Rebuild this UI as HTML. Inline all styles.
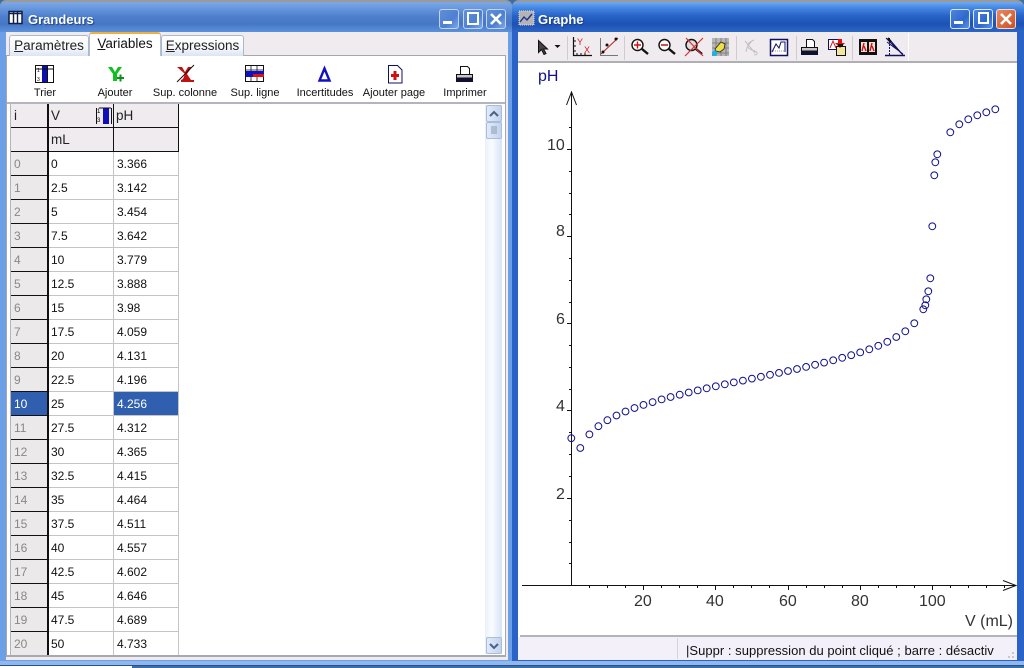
<!DOCTYPE html>
<html><head><meta charset="utf-8"><title>Grandeurs - Graphe</title>
<style>
*{box-sizing:border-box}
html,body{margin:0;padding:0;width:1024px;height:668px;overflow:hidden;background:#3b6ea5}
body{position:relative;font-family:"Liberation Sans",sans-serif;color:#111}
div{position:absolute}
.strip{left:0;top:660px;width:1024px;height:8px;background:linear-gradient(#2f62b8 0,#2f62b8 1px,#8fb8ee 1px,#8fb8ee 5px,#2a4f8a 5px,#2a4f8a 6px,#3b6ea5 6px)}
.strip2{left:0;top:666px;width:132px;height:2px;background:#fff}
.frameL{left:0;top:0;width:512px;height:661px;background:#6d9fe6;border-radius:6px 6px 0 0}
.frameR{left:512px;top:0;width:512px;height:661px;background:#2a63c8;border-radius:6px 6px 0 0}
.titleL{left:0;top:0;width:512px;height:32px;border-top:2px solid #9a9a9a;border-radius:7px 7px 0 0;background:linear-gradient(#7fa8e2 0,#6b9be0 5px,#4f80cc 14px,#4677c6 22px,#5c92dc 30px)}
.titleR{left:512px;top:0;width:512px;height:32px;border-top:2px solid #9a9a9a;border-radius:7px 7px 0 0;background:linear-gradient(#6cabf2 0,#4a8be6 5px,#2763c6 14px,#1c52b4 22px,#2d66c6 30px)}
.tt{top:12px;font-weight:bold;font-size:13px;color:#fff;line-height:16px;text-shadow:1px 1px 1px #1c3f80}
.b{top:9px;width:20px;height:20px;border-radius:3px;border:1px solid #c3d4f0;background:linear-gradient(135deg,#5f8fd8,#4e80d2 60%,#7ea6e6)}
.r2{background:linear-gradient(135deg,#4b85e0,#2f68cc 60%,#5c92e6);border-color:#dfe8f8}
.cl{background:linear-gradient(135deg,#e88a62,#d8683c 60%,#c85028);border-color:#f2dcd0}
.bodyL{left:6px;top:32px;width:502px;height:628px;background:#efebef}
.panel{left:6px;top:55px;width:500px;height:602px;background:#fff;border:1px solid #a6a6ae;border-bottom:2px solid #a8a8b0}
.tab{top:35px;height:21px;border:1px solid #a8b8d0;border-bottom:none;border-radius:3px 3px 0 0;background:linear-gradient(#fff,#f6f7fa 60%,#dbe4f2);font-size:13.5px;line-height:20px;text-align:center;color:#222}
.tabA{top:32px;height:24px;background:#fff;border:1px solid #b8c0d0;border-top:2px solid #f0b040;border-bottom:none;border-radius:3px 3px 0 0;font-size:13.5px;line-height:20px;text-align:center;color:#111;z-index:2}
u{text-decoration:underline}
.lab{top:86px;height:14px;font-size:11px;line-height:14px;text-align:center;width:90px;color:#111}
.sep{left:7px;top:102px;width:498px;height:2px;background:#b4b4ba}
.grid{left:10px;top:104px;width:493px;height:551px;overflow:hidden;border-left:1px solid #b4b4ba}
.grid div{height:24px;font-size:12px;line-height:24px;padding-left:2px;white-space:nowrap}
.grid .h{background:#efebef;border-right:1px solid #111;border-bottom:1px solid #111;color:#222;font-size:13.5px}
.i{left:0;width:38px;background:#ece9ea;color:#888;border-right:2px solid #111;border-bottom:1px solid #111;padding-left:3px!important}
.v{left:38px;width:65px;border-right:1px solid #c4c4c4;border-bottom:1px solid #c4c4c4;background:#fff}
.p{left:103px;width:65px;border-right:1px solid #c4c4c4;border-bottom:1px solid #c4c4c4;background:#fff;padding-left:3px!important}
.sel{background:#2f5fae!important;color:#fff!important}
.track{left:485px;top:105px;width:17px;height:549px;background:linear-gradient(90deg,#eaf0fb,#fafcff 40%,#d6e3f7)}
.sb{left:486px;width:16px;border:1px solid #a8bcdc;border-radius:2px;background:linear-gradient(90deg,#e2ebf8,#c3d3ee)}
.bodyR{left:518px;top:32px;width:499px;height:628px;background:#fff}
.tb{left:518px;top:32px;width:499px;height:31px;background:#efebef;border-bottom:2px solid #aeaeb4}
.stL{left:520px;top:635px;width:497px;height:2px;background:#b4b4b4}
.st{left:518px;top:637px;width:499px;height:23px;background:#f3f0fa}
.stt{left:686px;top:643px;font-size:13px;line-height:15px;white-space:nowrap;color:#111;letter-spacing:.03px}
svg{position:absolute;left:0;top:0;z-index:5}
</style></head><body>
<div class="strip"></div><div class="strip2"></div>
<div class="frameL"></div><div class="frameR"></div>
<div class="titleL"></div><div class="titleR"></div>
<div class="tt" style="left:28px">Grandeurs</div>
<div class="tt" style="left:538px">Graphe</div>
<div class="b" style="left:439px"></div><div class="b" style="left:463px"></div><div class="b" style="left:486px"></div>
<div class="b r2" style="left:950px"></div><div class="b r2" style="left:973px"></div><div class="b cl" style="left:996px"></div>

<div class="bodyL"></div>
<div class="panel"></div>
<div class="tab" style="left:9px;width:80px"><u>P</u>aramètres</div>
<div class="tabA" style="left:89px;width:72px"><u>V</u>ariables</div>
<div class="tab" style="left:161px;width:83px"><u>E</u>xpressions</div>
<div class="lab" style="left:0">Trier</div>
<div class="lab" style="left:70px">Ajouter</div>
<div class="lab" style="left:140px">Sup. colonne</div>
<div class="lab" style="left:210px">Sup. ligne</div>
<div class="lab" style="left:280px">Incertitudes</div>
<div class="lab" style="left:349px">Ajouter page</div>
<div class="lab" style="left:420px">Imprimer</div>
<div class="sep"></div>

<div class="grid">
<div class="h" style="left:0;top:0;width:38px;border-right-width:2px;padding-left:3px">i</div><div class="h" style="left:38px;top:0;width:65px">V</div><div class="h" style="left:103px;top:0;width:65px">pH</div>
<div class="h" style="left:0;top:24px;width:38px;border-right-width:2px"></div><div class="h" style="left:38px;top:24px;width:65px">mL</div><div class="h" style="left:103px;top:24px;width:65px"></div>
<div class="i" style="top:48px">0</div><div class="v" style="top:48px">0</div><div class="p" style="top:48px">3.366</div>
<div class="i" style="top:72px">1</div><div class="v" style="top:72px">2.5</div><div class="p" style="top:72px">3.142</div>
<div class="i" style="top:96px">2</div><div class="v" style="top:96px">5</div><div class="p" style="top:96px">3.454</div>
<div class="i" style="top:120px">3</div><div class="v" style="top:120px">7.5</div><div class="p" style="top:120px">3.642</div>
<div class="i" style="top:144px">4</div><div class="v" style="top:144px">10</div><div class="p" style="top:144px">3.779</div>
<div class="i" style="top:168px">5</div><div class="v" style="top:168px">12.5</div><div class="p" style="top:168px">3.888</div>
<div class="i" style="top:192px">6</div><div class="v" style="top:192px">15</div><div class="p" style="top:192px">3.98</div>
<div class="i" style="top:216px">7</div><div class="v" style="top:216px">17.5</div><div class="p" style="top:216px">4.059</div>
<div class="i" style="top:240px">8</div><div class="v" style="top:240px">20</div><div class="p" style="top:240px">4.131</div>
<div class="i" style="top:264px">9</div><div class="v" style="top:264px">22.5</div><div class="p" style="top:264px">4.196</div>
<div class="i sel" style="top:288px">10</div><div class="v" style="top:288px">25</div><div class="p sel" style="top:288px">4.256</div>
<div class="i" style="top:312px">11</div><div class="v" style="top:312px">27.5</div><div class="p" style="top:312px">4.312</div>
<div class="i" style="top:336px">12</div><div class="v" style="top:336px">30</div><div class="p" style="top:336px">4.365</div>
<div class="i" style="top:360px">13</div><div class="v" style="top:360px">32.5</div><div class="p" style="top:360px">4.415</div>
<div class="i" style="top:384px">14</div><div class="v" style="top:384px">35</div><div class="p" style="top:384px">4.464</div>
<div class="i" style="top:408px">15</div><div class="v" style="top:408px">37.5</div><div class="p" style="top:408px">4.511</div>
<div class="i" style="top:432px">16</div><div class="v" style="top:432px">40</div><div class="p" style="top:432px">4.557</div>
<div class="i" style="top:456px">17</div><div class="v" style="top:456px">42.5</div><div class="p" style="top:456px">4.602</div>
<div class="i" style="top:480px">18</div><div class="v" style="top:480px">45</div><div class="p" style="top:480px">4.646</div>
<div class="i" style="top:504px">19</div><div class="v" style="top:504px">47.5</div><div class="p" style="top:504px">4.689</div>
<div class="i" style="top:528px">20</div><div class="v" style="top:528px">50</div><div class="p" style="top:528px">4.733</div>
</div>
<div class="track"></div>
<div class="sb" style="top:105px;height:17px"></div>
<div class="sb" style="top:122px;height:17px"></div>
<div class="sb" style="top:637px;height:17px"></div>

<div class="bodyR"></div>
<div class="tb"></div>
<div class="stL"></div>
<div class="st"></div>
<div style="left:677px;top:638px;width:1px;height:21px;background:#d4d2dc"></div>
<div class="stt">|Suppr : suppression du point cliqué ; barre : désactiv</div>

<svg width="1024" height="668" viewBox="0 0 1024 668" shape-rendering="auto">
<!-- title icons -->
<rect x="9" y="11.500" width="13" height="12" fill="#fff" stroke="#10204a" stroke-width="1.500"/><path d="M9 13.500h13M13.500 12v11M17.500 12v11" stroke="#10204a" stroke-width="1.400"/>
<rect x="519" y="11" width="15" height="14" fill="#b4b4b4" stroke="#ddd" stroke-dasharray="1 1"/><path d="M520 22l4-5 3 3 5-6" fill="none" stroke="#20308a" stroke-width="1.400"/>
<!-- window buttons -->
<g fill="#fff"><rect x="443" y="21" width="9" height="3"/><rect x="954" y="21" width="9" height="3"/></g>
<g fill="none" stroke="#fff" stroke-width="2"><rect x="468" y="13" width="10" height="11"/><rect x="979" y="13" width="9" height="10"/></g>
<g stroke="#fff" stroke-width="2.600"><path d="M491 14l10 10M501 14l-10 10M1001 14l10 10M1011 14l-10 10"/></g>
<!-- panel toolbar icons -->
<rect x="35.500" y="65.500" width="18" height="17" fill="#fff" stroke="#111"/><rect x="42" y="66" width="5" height="16" fill="#1010b0"/><path d="M47.500 66v16M36 69h18" stroke="#111"/><text x="37" y="72" font-size="5" font-family="Liberation Sans">1</text><text x="37" y="81" font-size="5" font-family="Liberation Sans">3</text>
<path d="M108 67l4 0 3 5 3-5 4 0-5 7v7h-4v-7z" fill="#10c020"/><path d="M117 78h7M120.500 74.500v7" stroke="#089018" stroke-width="2"/>
<path d="M177 67h5l3 5 3-5h4l-5 7 4 6h3v2h-13v-2l2-1 2-5z" fill="#c01010"/><path d="M177 82L194 65" stroke="#111"/>
<rect x="245.500" y="65.500" width="18" height="16" fill="#fff" stroke="#111"/><path d="M245 70h19M251 65v17M257 65v17M245 75h19" stroke="#111" stroke-width=".8"/><rect x="246" y="71" width="18" height="6" fill="#1010c0"/><rect x="253" y="74" width="11" height="3" fill="#e01010"/>
<path d="M324.500 68.500L319.500 80.500H329.500Z" fill="none" stroke="#1010c0" stroke-width="2.400"/>
<path d="M388.500 65.500h9l4.500 4.500v13h-13.500z" fill="#fff" stroke="#101060"/><path d="M395 71v9M391 75.500h8" stroke="#d01010" stroke-width="3"/>
<path d="M460.500 66.500h7l2 2v7h-9z" fill="#fff" stroke="#111"/><rect x="456.500" y="74.500" width="16" height="3.500" fill="#c8c8c8" stroke="#111"/><rect x="456" y="78" width="17" height="4" fill="#101030"/>
<!-- header sort icon -->
<rect x="96" y="107" width="14" height="17" fill="#efebef"/><path d="M96.500 108v16M111.500 108v16" stroke="#111"/><rect x="103" y="108" width="6" height="16" fill="#1010b8"/><text x="97" y="113" font-size="6" font-family="Liberation Sans">1</text><text x="97" y="122" font-size="6" font-family="Liberation Sans">3</text><path d="M99 108h12" stroke="#111"/>
<!-- scrollbar glyphs -->
<path d="M490 116l4-4 4 4" fill="none" stroke="#4d6185" stroke-width="2"/><path d="M491 127h6M491 129h6M491 131h6M491 133h6" stroke="#8898b4"/><path d="M490 644l4 4 4-4" fill="none" stroke="#4d6185" stroke-width="2"/>
<!-- graph toolbar separators -->
<path d="M567.500 36v24M624.500 36v24M736.500 36v24M796.500 36v24M852.500 36v24" stroke="#cfcbd0"/>
<path d="M908.500 33v28" stroke="#fff"/>
<!-- cursor -->
<path d="M538.500 40.500v12l3-3 2.500 5 2-1-2.500-4.500 4 0z" fill="#444" stroke="#111"/><path d="M554.500 45h6l-3 3z" fill="#111"/>
<!-- axes icon -->
<path d="M573.500 37v18.500H592" fill="none" stroke="#111" stroke-width="1.200"/><path d="M577 55v-2M581 55v-2M585 55v-2M573 41h3M573 46h3M573 51h3" stroke="#111"/><text x="577" y="45" font-size="9" fill="#d02020" font-family="Liberation Sans">Y</text><text x="584" y="53" font-size="9" fill="#d02020" font-family="Liberation Sans">X</text>
<path d="M600.500 38v17.500H618" fill="none" stroke="#777"/><path d="M601 54l17-16" stroke="#c02020"/><circle cx="607" cy="45" r="1.500" fill="#111"/><circle cx="616" cy="39" r="1.500" fill="#111"/><circle cx="603" cy="52" r="1.500" fill="#111"/>
<!-- zooms -->
<g fill="none" stroke="#111"><circle cx="637.500" cy="45" r="5.500" fill="#fff" stroke-width="1.400"/><circle cx="664.500" cy="45" r="5.500" fill="#fff" stroke-width="1.400"/><circle cx="691.500" cy="45" r="5.500" fill="#ddd" stroke-width="1.400"/></g>
<path d="M642 49l6 5M669 49l6 5M696 49l6 5" stroke="#111" stroke-width="2.400"/>
<path d="M634 45h7M637.500 41.500v7M661 45h7" stroke="#d01010" stroke-width="1.400"/><path d="M686 38l17 18M703 38l-18 18" stroke="#d83030" stroke-width="1.200"/>
<!-- hand grid -->
<rect x="712" y="38" width="17" height="18" fill="#b6b6b6"/><path d="M712 43h17M712 48h17M712 53h17M716 38v18M721 38v18M726 38v18" stroke="#777" stroke-width=".8"/><path d="M715 49l6-7 4 2-1 5-4 3-4-1z" fill="#f0e040" stroke="#222" stroke-width=".8"/><path d="M712 52l3-2 3 3-2 3h-4z" fill="#20b0e8"/>
<!-- disabled -->
<path d="M745 41l10 12M754 40c-8 3-8 8-2 10 7 2 6 5 2 5M746 52c1-6 3-8 6-11" fill="none" stroke="#c0c0c0"/>
<rect x="770.500" y="39.500" width="17" height="16" fill="#fff" stroke="#101060" stroke-width="1.500"/><path d="M772 52l4-8 3 4 2-6h4v10" fill="none" stroke="#101060"/><path d="M771 51h16" stroke="#999" stroke-dasharray="1 1"/>
<!-- printer -->
<path d="M806.500 39.500h6l2 2v7h-8z" fill="#fff" stroke="#111"/><rect x="801.500" y="47.500" width="16" height="3.500" fill="#c8c8c8" stroke="#111"/><rect x="801" y="51" width="17" height="4" fill="#101030"/>
<!-- copy -->
<rect x="828.500" y="39.500" width="11" height="10" fill="#fff" stroke="#101060"/><path d="M830 48l3-7 3 7" fill="none" stroke="#d02020"/><rect x="836.500" y="46.500" width="9" height="9" fill="#f0e8a0" stroke="#111"/><path d="M838 39h4v4h3l-5 5-5-5h3z" fill="#e01010"/><rect x="838" y="44" width="5" height="3" fill="#111"/>
<!-- film -->
<rect x="859" y="39" width="18" height="16" fill="#111"/><rect x="861" y="42" width="6" height="10" fill="#f0e0d8"/><rect x="869" y="42" width="6" height="10" fill="#f0e0d8"/><path d="M864 43l-2 8M864 46l2 5M872 43l-2 8M872 46l2 5" stroke="#d01010" stroke-width="1.400"/>
<!-- tangents -->
<path d="M885 55.500h20" stroke="#101060" stroke-width="1.500"/><path d="M889.500 38v17" stroke="#101090" stroke-dasharray="2 1"/><path d="M886 38l17 17M887 42l16 12M890 40l13 15" stroke="#101060"/><path d="M888 38l3 4" stroke="#111" stroke-width="2"/>
<!-- axes -->
<g stroke="#111" fill="none">
<path d="M571.500 92V585M522 585.500H1016"/>
<path d="M566.500 105L571.500 92L576.500 105M1003 580.500L1016 585.500L1003 590.500"/>
<path d="M589.500 586v2M607.500 586v2M625.500 586v2M661.500 586v2M679.500 586v2M697.500 586v2M733.500 586v2M751.500 586v2M769.500 586v2M806.500 586v2M824.500 586v2M842.500 586v2M878.500 586v2M896.500 586v2M914.500 586v2M950.500 586v2M968.500 586v2M986.500 586v2M1004.500 586v2"/>
<path d="M643.500 586v4M715.500 586v4M788.500 586v4M860.500 586v4M932.500 586v4"/>
<path d="M567 149.500h4M567 236.500h4M567 323.500h4M567 410.500h4M567 498.500h4"/>
<path d="M569 127.500h2M569 171.500h2M569 193.500h2M569 214.500h2M569 258.500h2M569 280.500h2M569 302.500h2M569 345.500h2M569 367.500h2M569 389.500h2M569 432.500h2M569 454.500h2M569 476.500h2M569 520.500h2M569 542.500h2M569 563.500h2"/>
</g>
<g font-family="Liberation Sans" font-size="16" fill="#333">
<text x="547" y="150">10</text><text x="556" y="236">8</text><text x="556" y="324">6</text><text x="556" y="411">4</text><text x="556" y="499">2</text>
<text x="634" y="606">20</text><text x="706" y="606">40</text><text x="779" y="606">60</text><text x="851" y="606">80</text><text x="919" y="606">100</text>
<text x="965" y="626">V (mL)</text>
</g>
<text x="538" y="81" font-family="Liberation Sans" font-size="16" fill="#10108c">pH</text>
<!-- data points -->
<g fill="none" stroke="#10108c" stroke-width="1">
<circle cx="571.300" cy="438.200" r="3.400"/><circle cx="580.300" cy="448" r="3.400"/><circle cx="589.400" cy="434.400" r="3.400"/><circle cx="598.400" cy="426.200" r="3.400"/><circle cx="607.400" cy="420.200" r="3.400"/><circle cx="616.500" cy="415.500" r="3.400"/><circle cx="625.500" cy="411.500" r="3.400"/><circle cx="634.500" cy="408" r="3.400"/><circle cx="643.500" cy="404.900" r="3.400"/><circle cx="652.600" cy="402.100" r="3.400"/><circle cx="661.600" cy="399.400" r="3.400"/><circle cx="670.600" cy="397" r="3.400"/><circle cx="679.700" cy="394.700" r="3.400"/><circle cx="688.700" cy="392.500" r="3.400"/><circle cx="697.700" cy="390.400" r="3.400"/><circle cx="706.700" cy="388.300" r="3.400"/><circle cx="715.800" cy="386.300" r="3.400"/><circle cx="724.800" cy="384.300" r="3.400"/><circle cx="733.800" cy="382.400" r="3.400"/><circle cx="742.900" cy="380.600" r="3.400"/><circle cx="751.900" cy="378.600" r="3.400"/><circle cx="760.900" cy="376.800" r="3.400"/><circle cx="770" cy="374.800" r="3.400"/><circle cx="779" cy="372.900" r="3.400"/><circle cx="788" cy="371" r="3.400"/><circle cx="797" cy="369" r="3.400"/><circle cx="806.100" cy="366.900" r="3.400"/><circle cx="815.100" cy="364.800" r="3.400"/><circle cx="824.100" cy="362.600" r="3.400"/><circle cx="833.200" cy="360.300" r="3.400"/><circle cx="842.200" cy="357.800" r="3.400"/><circle cx="851.200" cy="355.200" r="3.400"/><circle cx="860.200" cy="352.400" r="3.400"/><circle cx="869.300" cy="349.300" r="3.400"/><circle cx="878.300" cy="345.800" r="3.400"/><circle cx="887.300" cy="341.800" r="3.400"/>
<circle cx="896.300" cy="337" r="3.400"/><circle cx="905.300" cy="331.300" r="3.400"/><circle cx="914.300" cy="323.300" r="3.400"/><circle cx="923.300" cy="309.300" r="3.400"/><circle cx="925.300" cy="305.300" r="3.400"/><circle cx="926.300" cy="299.300" r="3.400"/><circle cx="928.300" cy="291.300" r="3.400"/><circle cx="930.300" cy="278.300" r="3.400"/><circle cx="932.300" cy="226.300" r="3.400"/><circle cx="934.300" cy="175.300" r="3.400"/><circle cx="935.300" cy="162.300" r="3.400"/><circle cx="937.300" cy="154.300" r="3.400"/><circle cx="950.300" cy="132.300" r="3.400"/><circle cx="959.300" cy="124.300" r="3.400"/><circle cx="968.300" cy="119.300" r="3.400"/><circle cx="977.300" cy="115.300" r="3.400"/><circle cx="986.300" cy="112.300" r="3.400"/><circle cx="995.300" cy="109.300" r="3.400"/>
</g>
<!-- resize grip -->
<path d="M1008 657h2M1012 657h2M1012 653h2" stroke="#c8c8d0" stroke-width="2"/>
</svg>
</body></html>
